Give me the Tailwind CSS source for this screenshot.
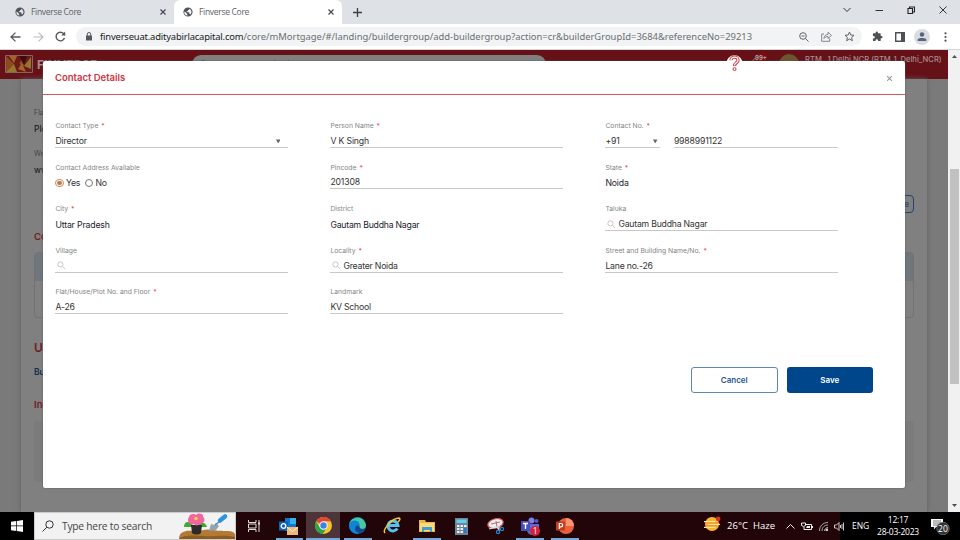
<!DOCTYPE html>
<html lang="en">
<head>
<meta charset="utf-8">
<title>Finverse Core</title>
<script src="https://cdn.jsdelivr.net/npm/@tailwindcss/browser@4"></script>
</head>
<body class="overflow-hidden">
<svg class="hidden">
  <symbol id="globe" viewBox="0 0 24 24"><path fill-rule="evenodd" d="M12 1a11 11 0 1 0 0 22 11 11 0 0 0 0-22zm-1.500 19.500A8.600 8.600 0 0 1 3.600 10.500L9 15v1.500l2 2zm7.500-2.700c-.3-.9-1-1.500-2-1.500h-1v-3.300l-6-1V10h3V7h2.500L15 4.100A8.600 8.600 0 0 1 18 17.800z"/></symbol>
  <symbol id="lens" viewBox="0 0 10 10"><g fill="none" stroke="currentColor" stroke-width=".9"><circle cx="3.800" cy="3.800" r="2.900"/><path d="M6 6l3.300 3"/></g></symbol>
</svg>
<div class="flex h-[540px] w-[960px] flex-col overflow-hidden font-['Open_Sans',sans-serif]">

  <!-- Tab strip -->
  <div class="flex h-6 shrink-0 items-stretch bg-[#dee1e6] text-[8.600px] text-[#5f6368]">
    <div class="flex w-[174px] items-center pl-[14.500px] pr-2">
      <svg class="size-[10px] fill-[#50545a]"><use href="#globe"/></svg>
      <span class="ml-[6.500px] flex-1 tracking-[-0.350px]">Finverse Core</span>
      <svg class="size-[6px]" viewBox="0 0 6 6" stroke="#45494d" stroke-width="1.200"><path d="M.5.5l5 5M5.500.5l-5 5"/></svg>
    </div>
    <div class="flex w-[168px] items-center rounded-t-md bg-white pl-[8.500px] pr-2">
      <svg class="size-[10px] fill-[#50545a]"><use href="#globe"/></svg>
      <span class="ml-[6.500px] flex-1 tracking-[-0.350px]">Finverse Core</span>
      <svg class="size-[6px]" viewBox="0 0 6 6" stroke="#45494d" stroke-width="1.200"><path d="M.5.5l5 5M5.500.5l-5 5"/></svg>
    </div>
    <div class="flex flex-1 items-center pl-[11px]">
      <svg class="size-[9px]" viewBox="0 0 9 9" stroke="#3c4043" stroke-width="1.300"><path d="M0 4.500h9M4.500 0v9"/></svg>
    </div>
    <div class="flex items-start gap-[24px] pr-[13px] pt-[6px]">
      <svg class="size-2" viewBox="0 0 8 8" fill="none" stroke="#333"><path d="M.5 2L4 5.500 7.500 2"/></svg>
      <svg class="size-2" viewBox="0 0 8 8" stroke="#333"><path d="M.5 4.500h7.500"/></svg>
      <svg class="size-2" viewBox="0 0 8 8" fill="none" stroke="#222" stroke-width="1.100"><path d="M1 2.500h4.500v5H1zM2.500 2.500V1h5v5H5.500"/></svg>
      <svg class="size-2" viewBox="0 0 8 8" stroke="#222" stroke-width=".9"><path d="M.5.500l7 7M7.500.500l-7 7"/></svg>
    </div>
  </div>

  <!-- Address bar -->
  <div class="flex h-[26px] shrink-0 items-center border-b border-[#d5d5d5] bg-white pl-[10px]">
    <svg class="h-[10px] w-[11px]" viewBox="0 0 11 10" fill="none" stroke="#55595e" stroke-width="1.300"><path d="M10.500 5H1.200M5.500.600L1 5l4.500 4.400"/></svg>
    <svg class="ml-[12px] h-[10px] w-[11px]" viewBox="0 0 11 10" fill="none" stroke="#b9bbbd" stroke-width="1.200"><path d="M.5 5h9.300M5.500.600L10 5 5.500 9.400"/></svg>
    <svg class="ml-[11px] size-[11px]" viewBox="0 0 11 11" fill="none" stroke="#55595e" stroke-width="1.400"><path d="M9.500 7A4.300 4.300 0 1 1 8.700 2.700L10 4"/><path d="M10.200.5v4h-4z" fill="#55595e" stroke="none"/></svg>
    <div class="ml-[10px] mr-[10px] flex h-[19px] w-[785.500px] shrink-0 items-center rounded-full bg-[#f1f3f4] pl-[10px] pr-[7px]">
      <svg class="h-[9px] w-[6px] shrink-0" viewBox="0 0 6 9"><path d="M0 3.500h6V8.500H0z" fill="#55595e"/><path d="M1.300 4V2.200a1.700 1.700 0 0 1 3.400 0V4" fill="none" stroke="#55595e"/></svg>
      <div class="ml-[8px] flex-1 whitespace-nowrap pt-px font-['Noto_Sans',sans-serif] text-[9.400px] tracking-[0.010px] text-[#6b6f73]"><span class="tracking-[-0.170px] text-[#202124]">finverseuat.adityabirlacapital.com</span>/core/mMortgage/#/landing/buildergroup/add-buildergroup?action=cr&amp;builderGroupId=3684&amp;referenceNo=29213</div>
      <div class="flex items-center gap-[12px]">
        <svg class="size-[10px]" viewBox="0 0 10 10" fill="none" stroke="#5f6368"><circle cx="4" cy="4" r="3.300"/><path d="M6.500 6.500l3 3M2.500 4h3"/></svg>
        <svg class="size-[11px]" viewBox="0 0 11 11" fill="none" stroke="#777b7f" stroke-width=".9"><path d="M3 3H.7v7.300h8V7.500M3 7.500C3 4.500 5 3.500 7 3.500V1.200l3.500 3.300L7 7.500V5.500C5.500 5.500 4 6 3 7.500z"/></svg>
        <svg class="size-[11px]" viewBox="0 0 11 11" fill="none" stroke="#5f6368"><path d="M5.500 1l1.300 3 3.200.3-2.400 2.200.7 3.200-2.800-1.700-2.800 1.700.7-3.200L1 4.300 4.200 4z"/></svg>
      </div>
    </div>
    <div class="flex shrink-0 items-center">
      <svg class="size-[11px]" viewBox="0 0 24 24" fill="#4d5156"><path d="M20.500 11H19V7a2 2 0 0 0-2-2h-4V3.500a2.500 2.500 0 0 0-5 0V5H4a2 2 0 0 0-2 2v3.800h1.500a2.700 2.700 0 0 1 0 5.400H2V20a2 2 0 0 0 2 2h3.800v-1.500a2.700 2.700 0 0 1 5.400 0V22H17a2 2 0 0 0 2-2v-4h1.500a2.500 2.500 0 0 0 0-5z"/></svg>
      <svg class="ml-[12px] size-[10px]" viewBox="0 0 10 10"><path d="M.7.700h8.600v8.600H.7z" fill="none" stroke="#4d5156" stroke-width="1.400"/><path d="M6 0h4v10H6z" fill="#4d5156"/></svg>
      <svg class="ml-[9px] size-[16px]" viewBox="0 0 16 16"><circle cx="8" cy="8" r="8" fill="#d9dce2"/><circle cx="8" cy="5.500" r="2.200" fill="#55657c"/><path d="M3.700 12V10.500C3.700 8.500 12.300 8.500 12.300 10.500V12z" fill="#55657c"/></svg>
      <svg class="ml-[14px] h-[10px] w-[3px]" viewBox="0 0 3 10" fill="#4d5156"><circle cx="1.500" cy="1.300" r="1.100"/><circle cx="1.500" cy="5" r="1.100"/><circle cx="1.500" cy="8.700" r="1.100"/></svg>
    </div>
  </div>

  <!-- Page viewport -->
  <div class="flex h-[462px] shrink-0">
    <div class="relative flex w-[948px] flex-col overflow-hidden bg-[#7a7a7a] font-['Inter',sans-serif]">
      <header class="flex h-[29px] shrink-0 items-start bg-[#651117] pl-[5px]">
        <svg class="mt-[5px] h-[18px] w-[28px]" viewBox="0 0 28 18"><path d="M.5.500h27v17H.5z" fill="#6b1a17" stroke="#846465"/><path d="M1 1l8 8-8 8zM14 9l5-8v10z" fill="#8c4a1d"/><path d="M1 17l8-8 3 8zM19 11l7-9v12z" fill="#94762f"/><path d="M4 1h8L9 8zM13 14l4-6 4 9z" fill="#a3642b"/><path d="M14 1l5 9 3-9z" fill="#3d0c10"/></svg>
        <span class="ml-[4px] mt-[7px] w-[70px] text-[12px] font-bold leading-[16px] tracking-[0.2px] text-[#a39090]">FINVERSE</span>
        <div class="ml-[85px] mt-[5px] flex h-[18px] w-[354px] items-center rounded-full bg-[#808080] pl-2 text-[8px] text-[#333]">
          <svg class="mr-2 size-[8px] text-[#222]"><use href="#lens"/></svg>Search by Application Number, Name, PAN Number
        </div>
        <svg class="ml-[205px] mt-[4px] h-[12px] w-[8px]" viewBox="0 0 8 12" fill="none" stroke="#a78e90"><path d="M.5 12C1 6 3 4 8 3"/></svg>
        <div class="-ml-[8px] mt-[2px] flex h-[11px] w-[20px] items-center justify-center"><div class="flex size-[11px] items-center justify-center rounded-full bg-[#7f0a10] text-[6px] font-bold text-[#aaa]">99+</div></div>
        <div class="ml-[8px] mt-[4px] size-[20px] rounded-full bg-[#6f552f]"></div>
        <span class="ml-[6px] mt-[4px] whitespace-nowrap text-[7.600px] font-medium leading-[11px] text-[#a78e90]">RTM_ 1 Delhi NCR (RTM_1_Delhi_NCR)</span>
      </header>
      <main class="ml-[21px] flex w-[906px] flex-1 flex-col bg-[#808080] pl-[13px] pr-[13px] text-[8.500px] shadow-[0_0_5px_#606060]">
        <div class="mt-[29px] h-[10px] text-[7px] leading-[10px] text-[#444]">Flat</div>
        <div class="mt-[5px] h-[12px] leading-[12px] text-[#111]">Plot</div>
        <div class="mt-[14px] h-[10px] text-[7px] leading-[10px] text-[#444]">Website</div>
        <div class="mt-[5px] h-[12px] leading-[12px] text-[#111]">www</div>
        <div class="mt-[19px] flex h-[18px] w-[60px] items-center justify-end self-end rounded-sm border border-[#24426b] pr-[4px] text-[#24426b]">Create</div>
        <div class="mt-[17px] h-[14px] text-[9.500px] font-semibold leading-[14px] text-[#6f1a20]">Contact</div>
        <div class="mt-[8px] flex h-[66px] shrink-0 flex-col rounded-sm border border-[#727272]"><div class="h-[28px] bg-[#70777c]"></div></div>
        <div class="mt-[22px] h-[16px] text-[12px] font-semibold leading-[16px] text-[#6f1a20]">Units</div>
        <div class="mt-[10px] h-[12px] font-semibold leading-[12px] text-[#142c4f]">Builder</div>
        <div class="mt-[20px] h-[14px] text-[9.500px] font-semibold leading-[14px] text-[#6f1a20]">Individual</div>
        <div class="mt-[9px] h-[61px] shrink-0 rounded-sm bg-[#7b7b7b]"></div>
      </main>

      <!-- Contact details dialog -->
      <section class="absolute left-[43px] top-[11px] flex h-[427px] w-[862px] flex-col rounded-[2px] bg-white shadow-[0_0_2px_#555]">
        <div class="flex h-[34px] shrink-0 items-center justify-between border-b border-[#d9555e] pl-[12px] pr-[13px] pt-px">
          <h2 class="text-[9.500px] font-semibold text-[#d0343f]">Contact Details</h2>
          <svg class="size-[5px]" viewBox="0 0 5 5" stroke="#999" stroke-width="1.100"><path d="M0 0l5 5M5 0L0 5"/></svg>
        </div>
        <div class="ml-[12.400px] mt-[26px] grid auto-rows-[41.600px] grid-cols-[233px_233px_233px] gap-x-[42px] text-[8.700px] leading-[12px] tracking-[-0.160px] text-[#333]">
          <div>
            <div class="h-[9px] text-[6.800px] leading-[10px] tracking-normal text-[#858585]">Contact Type <span class="ml-px text-[#f0473f]">*</span></div>
            <div class="flex h-[18px] items-center border-b border-[#c8c8c8] pt-[5px]"><span class="flex-1">Director</span><svg class="mr-[8px] size-[4.500px] fill-[#666]" viewBox="0 0 5 5"><path d="M0 .5h5L2.500 5z"/></svg></div>
          </div>
          <div>
            <div class="h-[9px] text-[6.800px] leading-[10px] tracking-normal text-[#858585]">Person Name <span class="ml-px text-[#f0473f]">*</span></div>
            <div class="flex h-[18px] items-center border-b border-[#c8c8c8] pt-[5px]">V K Singh</div>
          </div>
          <div>
            <div class="h-[9px] text-[6.800px] leading-[10px] tracking-normal text-[#858585]">Contact No. <span class="ml-px text-[#f0473f]">*</span></div>
            <div class="flex gap-[14px]">
              <div class="flex h-[18px] w-[54.500px] items-center border-b border-[#c8c8c8] pt-[5px]"><span class="flex-1">+91</span><svg class="mr-[2px] size-[4.500px] fill-[#666]" viewBox="0 0 5 5"><path d="M0 .5h5L2.500 5z"/></svg></div>
              <div class="flex h-[18px] flex-1 items-center border-b border-[#c8c8c8] pt-[5px]">9988991122</div>
            </div>
          </div>
          <div>
            <div class="h-[9px] text-[6.800px] leading-[10px] tracking-normal text-[#858585]">Contact Address Available</div>
            <div class="flex h-[18px] items-center pt-[5px]">
              <span class="flex size-[8.500px] items-center justify-center rounded-full border border-[#c98a62]"><span class="size-[4.500px] rounded-full bg-[#c07848]"></span></span><span class="ml-[2px] w-[19px]">Yes</span>
              <span class="size-[8.500px] rounded-full border border-[#777]"></span><span class="ml-[2px]">No</span>
            </div>
          </div>
          <div>
            <div class="h-[9px] text-[6.800px] leading-[10px] tracking-normal text-[#858585]">Pincode <span class="ml-px text-[#f0473f]">*</span></div>
            <div class="flex h-[17px] items-center border-b border-[#c8c8c8] pt-[5px]">201308</div>
          </div>
          <div>
            <div class="h-[9px] text-[6.800px] leading-[10px] tracking-normal text-[#858585]">State <span class="ml-px text-[#f0473f]">*</span></div>
            <div class="flex h-[17px] items-center pt-[5px] text-[#1b1b2b]">Noida</div>
          </div>
          <div>
            <div class="h-[9px] text-[6.800px] leading-[10px] tracking-normal text-[#858585]">City <span class="ml-px text-[#f0473f]">*</span></div>
            <div class="flex h-[18px] items-center pt-[5px] text-[#1b1b2b]">Uttar Pradesh</div>
          </div>
          <div>
            <div class="h-[9px] text-[6.800px] leading-[10px] tracking-normal text-[#858585]">District</div>
            <div class="flex h-[18px] items-center pt-[5px] tracking-[-0.220px] text-[#1b1b2b]">Gautam Buddha Nagar</div>
          </div>
          <div>
            <div class="h-[9px] text-[6.800px] leading-[10px] tracking-normal text-[#858585]">Taluka</div>
            <div class="flex h-[18px] items-center border-b border-[#c8c8c8] pt-[5px] tracking-[-0.220px]"><svg class="ml-[2px] mr-[2px] size-[9px] text-[#bbb]"><use href="#lens"/></svg>Gautam Buddha Nagar</div>
          </div>
          <div>
            <div class="h-[9px] text-[6.800px] leading-[10px] tracking-normal text-[#858585]">Village</div>
            <div class="flex h-[18px] items-center border-b border-[#c8c8c8] pt-[5px]"><svg class="ml-[2px] size-[9px] text-[#bbb]"><use href="#lens"/></svg></div>
          </div>
          <div>
            <div class="h-[9px] text-[6.800px] leading-[10px] tracking-normal text-[#858585]">Locality <span class="ml-px text-[#f0473f]">*</span></div>
            <div class="flex h-[18px] items-center border-b border-[#c8c8c8] pt-[5px] tracking-[-0.220px]"><svg class="ml-[2px] mr-[2px] size-[9px] text-[#bbb]"><use href="#lens"/></svg>Greater Noida</div>
          </div>
          <div>
            <div class="h-[9px] text-[6.800px] leading-[10px] tracking-normal text-[#858585]">Street and Building Name/No. <span class="ml-px text-[#f0473f]">*</span></div>
            <div class="flex h-[18px] items-center border-b border-[#c8c8c8] pt-[5px] tracking-[-0.220px]">Lane no.-26</div>
          </div>
          <div>
            <div class="h-[9px] text-[6.800px] leading-[10px] tracking-normal text-[#858585]">Flat/House/Plot No. and Floor <span class="ml-px text-[#f0473f]">*</span></div>
            <div class="flex h-[18px] items-center border-b border-[#c8c8c8] pt-[5px]">A-26</div>
          </div>
          <div>
            <div class="h-[9px] text-[6.800px] leading-[10px] tracking-normal text-[#858585]">Landmark</div>
            <div class="flex h-[18px] items-center border-b border-[#c8c8c8] pt-[5px] tracking-[-0.220px]">KV School</div>
          </div>
        </div>
        <div class="mr-[32px] mt-[38.500px] flex justify-end gap-[9px] text-[8px] font-semibold">
          <button class="h-[25.500px] w-[86.500px] rounded-[3px] border border-[#5d87b5] text-[#1f5794]">Cancel</button>
          <button class="h-[25.500px] w-[86.500px] rounded-[3px] bg-[#00468b] text-white">Save</button>
        </div>
      </section>
      <svg class="absolute left-[726px] top-[5px] size-[17px]" viewBox="0 0 17 17"><circle cx="8.500" cy="8.500" r="8.200" fill="#fff"/><path d="M5 5.200C5 1.200 12 1.200 12 5.200 12 7.800 8.500 7.600 8.500 11" fill="none" stroke="#d0343f" stroke-width="3.200"/><path d="M5 5.200C5 1.200 12 1.200 12 5.200 12 7.800 8.500 7.600 8.500 10.400" fill="none" stroke="#fff" stroke-width="1.300"/><circle cx="8.500" cy="14.100" r="1.500" fill="#fff" stroke="#d0343f"/></svg>
    </div>

    <div class="flex w-[12px] flex-col items-center bg-[#f1f1f1]">
      <svg class="mt-[5px] h-[3px] w-[5px]" viewBox="0 0 5 3" fill="#505050"><path d="M0 3L2.500 0 5 3z"/></svg>
      <div class="mt-[111px] h-[215px] w-[9px] bg-[#c1c1c1]"></div>
      <svg class="mt-[120px] h-[3px] w-[5px]" viewBox="0 0 5 3" fill="#505050"><path d="M0 0h5L2.500 3z"/></svg>
    </div>
  </div>

  <!-- Taskbar -->
  <footer class="flex h-7 shrink-0 bg-[#220509] text-white">
    <div class="flex w-[34px] items-center justify-center bg-black">
      <svg class="h-[12px] w-[12px]" viewBox="0 0 12 12" fill="#fff"><path d="M0 1.700L5.300 1v4.600H0zM6 .9L12 0v5.600H6zM0 6.300h5.300v4.700L0 10.300zM6 6.300h6V12l-6-.9z"/></svg>
    </div>
    <div class="flex w-[202px] items-center border border-[#ccc] bg-[#f2f2f2] pl-[7px] text-[#444]">
      <svg class="size-[12px]" viewBox="0 0 12 12" fill="none" stroke="#333"><circle cx="7.500" cy="4.500" r="3.700"/><path d="M4.800 7.200L.5 11.500"/></svg>
      <span class="ml-[8px] flex-1 whitespace-nowrap pt-px text-[10.200px] tracking-[-0.200px]">Type here to search</span>
      <svg class="h-[26px] w-[56px] shrink-0" viewBox="0 0 56 26"><path d="M0 26C0 18 8 17 14 18 22 19 26 15 34 17 42 19 56 16 56 22V26z" fill="#b27a32"/><path d="M0 26c3-4 15-4 25-3 12 1 20-2 31 1v2z" fill="#8c5a22"/><path d="M5 14c0-6 6-7 10 0zM28 14c-2-6-7-5-10 0z" fill="#43a832"/><path d="M12 12h11l-1 8c-2 2-7 2-9 0z" fill="#2e2a2c"/><path d="M10 4c1-4 6-3 7-2 3-3 8-1 7 2 3 2 1 7-2 6-2 3-6 3-7 1-4 2-8-3-5-7z" fill="#f266a0"/><circle cx="17" cy="5.500" r="1.800" fill="#fbd04a"/><path d="M30 18l2-7 3 1 2-2 3 3-3 4z" fill="#8fa4b4"/><path d="M36 12l4-3" stroke="#6f8796" stroke-width="1.500"/><path d="M41 7.500l5-4" stroke="#2a94e0" stroke-width="4.500" stroke-linecap="round"/></svg>
    </div>
    <div class="flex w-[36px] items-center justify-center"><svg class="h-[12px] w-[12px]" viewBox="0 0 12 12" fill="none" stroke="#ddd"><path d="M.5 0v2.500h7.500V0M.5 4h7.500v4H.5zM.5 12V9.500h7.500V12M11 0v12"/><path d="M10 3.500h2" stroke-width="2"/></svg></div>
    <div class="flex w-[34px] flex-col items-center justify-between pt-[6px]">
      <svg class="h-[18px] w-[20px]" viewBox="0 0 20 18"><path d="M6 0h11v13H6z" fill="#1376c8"/><path d="M11 0h6v6h-6z" fill="#35b1ee"/><path d="M0 3.500h9v9H0z" fill="#0b63b3"/><circle cx="4.500" cy="8" r="2.300" fill="none" stroke="#fff" stroke-width="1.300"/><path d="M8 9h11v8H8z" fill="#f0b978"/><path d="M8 9l5.500 4.500L19 9" fill="none" stroke="#fff0d8"/></svg>
      <div class="h-[2px] w-[27px] bg-[#76a9d8]"></div>
    </div>
    <div class="flex w-[34px] flex-col items-center justify-between bg-[#4d3438] pt-[5px]">
      <svg class="size-[17px]" viewBox="0 0 18 18"><circle cx="9" cy="9" r="9" fill="#f6c52b"/><path d="M9 9L1.200 4.500A9 9 0 0 1 16.800 4.500H9z" fill="#e2453a"/><path d="M1.200 4.500A9 9 0 0 0 8.300 18L12.500 11 9 9 5 11z" fill="#2ea44f"/><circle cx="9" cy="9" r="4.400" fill="#fff"/><circle cx="9" cy="9" r="3.400" fill="#3f80ea"/></svg>
      <div class="h-[2px] w-[34px] bg-[#76a9d8]"></div>
    </div>
    <div class="flex w-[35px] flex-col items-center justify-between pt-[5px]">
      <svg class="size-[17px]" viewBox="0 0 18 18"><circle cx="9" cy="9" r="9" fill="#1479c6"/><path d="M.3 7C2 0 16-3 18 9c0 4-5 5-7 2 2-6-7-8-10.700-4z" fill="#45c8a4"/><path d="M.3 7C3 2 12 3 11 9c-5-3-7 5 0 8-6 2-12-3-10.700-10z" fill="#1184d5"/><path d="M11 10c0 3 4 3 6 2-1 3-4 5-6 5-5-1-6-6-2-8z" fill="#10488d"/></svg>
      <div class="h-[2px] w-[28px] bg-[#76a9d8]"></div>
    </div>
    <div class="flex w-[33px] items-center justify-center pb-[1px]"><svg class="h-[17px] w-[18px]" viewBox="0 0 18 17"><path d="M14.300 11.500A5 5 0 1 1 15 8.500H6" fill="none" stroke="#56c1f0" stroke-width="3"/><path d="M2 16C-1 13 9 1 16 1c2 1 0 3-1 4" fill="none" stroke="#f3c83c" stroke-width="1.500"/></svg></div>
    <div class="flex w-[37px] flex-col items-center justify-between pt-[7px]">
      <svg class="h-[14px] w-[16px]" viewBox="0 0 16 14"><path d="M0 1h6l1 2h9v10H0z" fill="#e9b83d"/><path d="M1 4h14v8H1z" fill="#fbda78"/><path d="M3 8h10v5h-2v-2H5v2H3z" fill="#429cd8"/></svg>
      <div class="h-[2px] w-[28px] bg-[#76a9d8]"></div>
    </div>
    <div class="flex w-[32px] items-center justify-center"><svg class="h-[17px] w-[13px]" viewBox="0 0 13 17"><path d="M0 0h13v17H0z" fill="#718493"/><path d="M1.500 1.500h10v3.500h-10z" fill="#5fd0ee"/><path d="M2 7h2.500v2H2zM5.500 7H8v2H5.500zM9 7h2.500v2H9zM2 10h2.500v2H2zM5.500 10H8v2H5.500zM2 13h2.500v2H2zM5.500 13H8v2H5.500z" fill="#e9eef2"/><path d="M9 10h2.500v5H9z" fill="#2878c4"/></svg></div>
    <div class="flex w-[37px] items-center justify-center"><svg class="h-[16px] w-[18px]" viewBox="0 0 18 16"><ellipse cx="8.500" cy="5.500" rx="7.800" ry="4.700" fill="#eee" stroke="#d35b60" stroke-width="1.200" transform="rotate(-15 8.500 5.500)"/><path d="M4 6l9-2M9 3l1 6" stroke="#ac7075"/><path d="M2 11l8-2 2 3M12 7v6" fill="none" stroke="#ddd" stroke-width="1.200"/><circle cx="11" cy="14" r="1.600" fill="none" stroke="#2583cf" stroke-width="1.200"/><circle cx="15" cy="11" r="1.600" fill="none" stroke="#2583cf" stroke-width="1.200"/></svg></div>
    <div class="flex w-[32px] flex-col items-center justify-between pt-[5px]">
      <svg class="h-[19px] w-[19px]" viewBox="0 0 19 19"><circle cx="10.500" cy="3.500" r="3" fill="#7b83eb"/><circle cx="15.500" cy="4" r="2" fill="#5059c9"/><path d="M6 7h12v6c0 4-3 5-6 5s-6-2-6-5z" fill="#6269d4"/><path d="M0 4h9v10H0z" fill="#474fb8"/><path d="M2 6.500h5M4.500 6.500V12" stroke="#fff" stroke-width="1.400"/><circle cx="14" cy="14" r="5" fill="#d4213d"/><text x="11.700" y="17" font-size="8.500" fill="#fff">1</text></svg>
      <div class="h-[2px] w-[28px] bg-[#76a9d8]"></div>
    </div>
    <div class="flex w-[37px] flex-col items-center justify-between pt-[6px]">
      <svg class="h-[16px] w-[18px]" viewBox="0 0 18 16"><circle cx="10" cy="8" r="8" fill="#e8623c"/><path d="M10 0a8 8 0 0 1 8 8h-8z" fill="#ff9270"/><path d="M0 3.500h9v9H0z" fill="#c33c1e"/><path d="M3.300 11V5.500h1.500c2.500 0 2.500 3.300 0 3.300H3.300" fill="none" stroke="#fff" stroke-width="1.200"/></svg>
      <div class="h-[2px] w-[28px] bg-[#76a9d8]"></div>
    </div>
    <div class="flex flex-1 items-center justify-end gap-[6px] pr-[12px] text-[9.500px]">
      <svg class="-mt-[4px] h-[16px] w-[17px] shrink-0" viewBox="0 0 18 17"><circle cx="8.500" cy="8.500" r="7.500" fill="#f8b431"/><path d="M0 6h12M4 9h13M0 12h12" stroke="#ffe2a0" stroke-width="1.300"/><path d="M2 10.500h12M2 7.500h13" stroke="#ed8a1e"/><circle cx="15" cy="3" r="2.500" fill="#d9302b"/></svg>
      <span class="whitespace-nowrap pt-px">26°C&nbsp; Haze</span>
      <svg class="ml-[5px] h-[5px] w-[9px]" viewBox="0 0 9 5" fill="none" stroke="#eee"><path d="M.5 4.500l4-4 4 4"/></svg>
      <svg class="h-[9px] w-[12px]" viewBox="0 0 12 9" fill="none" stroke="#eee"><path d="M4 2.500h6.500v5H3V5M11.500 4v2M.5 1h4v2.500l-2 1-2-1z"/><path d="M6 4h3v2H5z" fill="#eee" stroke="none"/></svg>
      <svg class="h-[9px] w-[9px]" viewBox="0 0 9 9" fill="none" stroke="#bbb" stroke-width=".9"><path d="M.5 9C.5 4 4 .5 9 .5M3 9c0-3.500 2.500-6 6-6M5.500 9c0-2 1.500-3.500 3.500-3.500"/><path d="M7 7h2v2H7z" fill="#fff"/></svg>
    </div>
    <div class="flex w-[120px] items-center bg-black text-[8.500px]">
      <svg class="-ml-[6px] h-[9px] w-[11px] shrink-0" viewBox="0 0 11 9" fill="none" stroke="#ddd" stroke-width=".9"><path d="M.5 3h2L5 .5v8L2.500 6h-2zM6.500 3v3M8 2v5M9.500.5v8"/></svg>
      <span class="ml-[7px] w-[17px]">ENG</span>
      <div class="ml-[6px] w-[46px] text-center leading-[12.500px] tracking-[-0.250px]"><div>12:17</div><div class="whitespace-nowrap">28-03-2023</div></div>
      <svg class="ml-[10px] h-[18px] w-[19px] shrink-0" viewBox="0 0 19 18"><path d="M0 2h12v8H5l-2 2.500V10H0z" fill="#fff"/><path d="M2 4h8M2 6h8M2 8h5" stroke="#555" stroke-width=".8"/><circle cx="12" cy="11.500" r="6.300" fill="#333" stroke="#777" stroke-width=".7"/><text x="7.100" y="14.700" font-size="8.500" fill="#fff">20</text></svg>
    </div>
  </footer>
</div>
</body>
</html>
